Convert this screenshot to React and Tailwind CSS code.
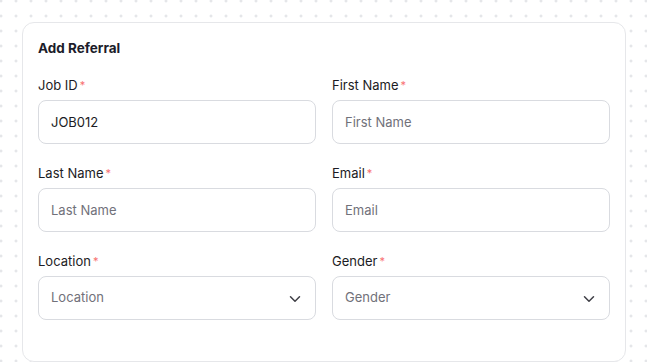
import React from "react";
import { ChevronDown } from "lucide-react";

const Label = ({ children }) => (
  <label className="block text-[13px] leading-5 text-[#1c1c24] mb-[5px]">
    {children}
    <span className="text-[#f87171] ml-[2px] text-[11px] align-top">*</span>
  </label>
);

const TextField = ({ label, placeholder, value }) => (
  <div>
    <Label>{label}</Label>
    <input
      className="w-full h-[44px] rounded-lg border border-[#d9dbe0] bg-white px-3 text-[13px] text-[#1c1c24] placeholder:text-[#71717a] outline-none"
      placeholder={placeholder}
      defaultValue={value}
    />
  </div>
);

const SelectField = ({ label, placeholder }) => (
  <div>
    <Label>{label}</Label>
    <div className="w-full h-[44px] rounded-lg border border-[#d9dbe0] bg-white pl-3 pr-[11px] flex items-center justify-between">
      <span className="text-[13px] text-[#71717a]">{placeholder}</span>
      <ChevronDown size={18} strokeWidth={2} className="text-[#3f3f46] mt-[1px]" />
    </div>
  </div>
);

export default function App() {
  return (
    <div
      className="min-h-[362px] w-full bg-white bg-[radial-gradient(circle,#dcdde1_1px,transparent_1.3px)] bg-[size:15px_15px] bg-[position:-6.5px_-6.5px] pt-[22px] pl-[22px] pr-[21px]"
      style={{ fontFamily: "Inter, 'Noto Sans', sans-serif" }}
    >
      <div className="w-[604px] h-[340px] rounded-xl border border-[#e6e7ea] bg-white px-[15px] pt-[15px]">
        <h2 className="text-[13.5px] font-bold leading-5 text-[#1c1c2a] mb-[17px]">Add Referral</h2>
        <div className="grid grid-cols-2 gap-x-4 gap-y-[19px]">
          <TextField label="Job ID" value="JOB012" />
          <TextField label="First Name" placeholder="First Name" />
          <TextField label="Last Name" placeholder="Last Name" />
          <TextField label="Email" placeholder="Email" />
          <SelectField label="Location" placeholder="Location" />
          <SelectField label="Gender" placeholder="Gender" />
        </div>
      </div>
    </div>
  );
}
